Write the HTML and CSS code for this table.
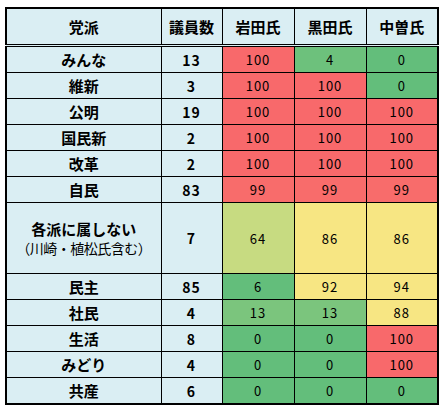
FILE: index.html
```html
<!DOCTYPE html>
<html lang="ja">
<head>
<meta charset="UTF-8">
<meta name="viewport" content="width=device-width, initial-scale=1.0">
<title>会派別 賛否</title>
<link rel="stylesheet" href="styles.css">
</head>
<body>

<table class="vote-table">
  <colgroup>
    <col class="col-party">
    <col class="col-seats">
    <col class="col-vote">
    <col class="col-vote">
    <col class="col-vote">
  </colgroup>
  <thead>
    <tr>
      <th>党派</th>
      <th>議員数</th>
      <th>岩田氏</th>
      <th>黒田氏</th>
      <th>中曽氏</th>
    </tr>
  </thead>
  <tbody>
    <tr>
      <td class="party">みんな</td><td class="seats">13</td>
      <td class="red">100</td><td class="green-4">4</td><td class="green">0</td>
    </tr>
    <tr>
      <td class="party">維新</td><td class="seats">3</td>
      <td class="red">100</td><td class="red">100</td><td class="green">0</td>
    </tr>
    <tr>
      <td class="party">公明</td><td class="seats">19</td>
      <td class="red">100</td><td class="red">100</td><td class="red">100</td>
    </tr>
    <tr>
      <td class="party">国民新</td><td class="seats">2</td>
      <td class="red">100</td><td class="red">100</td><td class="red">100</td>
    </tr>
    <tr>
      <td class="party">改革</td><td class="seats">2</td>
      <td class="red">100</td><td class="red">100</td><td class="red">100</td>
    </tr>
    <tr>
      <td class="party">自民</td><td class="seats">83</td>
      <td class="red-99">99</td><td class="red-99">99</td><td class="red-99">99</td>
    </tr>
    <tr class="tall">
      <td class="party">各派に属しない<br><span class="note">（川崎・植松氏含む）</span></td><td class="seats">7</td>
      <td class="lime">64</td><td class="yellow">86</td><td class="yellow">86</td>
    </tr>
    <tr>
      <td class="party">民主</td><td class="seats">85</td>
      <td class="green">6</td><td class="yellow">92</td><td class="yellow">94</td>
    </tr>
    <tr>
      <td class="party">社民</td><td class="seats">4</td>
      <td class="green-13">13</td><td class="green-13">13</td><td class="yellow">88</td>
    </tr>
    <tr>
      <td class="party">生活</td><td class="seats">8</td>
      <td class="green">0</td><td class="green">0</td><td class="red">100</td>
    </tr>
    <tr>
      <td class="party">みどり</td><td class="seats">4</td>
      <td class="green">0</td><td class="green">0</td><td class="red">100</td>
    </tr>
    <tr>
      <td class="party">共産</td><td class="seats">6</td>
      <td class="green">0</td><td class="green">0</td><td class="green">0</td>
    </tr>
  </tbody>
</table>

</body>
</html>
```

FILE: styles.css
```css
body {
  margin: 0;
  padding: 7px 0 0 5px;
  background: #fff;
  font-family: "Noto Sans CJK JP", sans-serif;
  color: #000;
}
.vote-table {
  border-collapse: collapse;
  table-layout: fixed;
  width: 432px;
  border: 2px solid #000;
}
.col-party {
  width: 155px;
}
.col-seats {
  width: 61px;
}
.col-vote {
  width: 72px;
}
.vote-table th,
.vote-table td {
  border: 1px solid #000;
  padding: 0;
  text-align: center;
  vertical-align: middle;
  line-height: 1;
}
.vote-table th {
  height: 35px;
  background: #daeef3;
  font-size: 15px;
  font-weight: bold;
  border-bottom: 3px double #000;
}
.vote-table td {
  height: 25px;
  font-size: 13px;
  letter-spacing: 1px;
}
.vote-table tr.tall td {
  height: 70px;
}
.party,
.seats {
  background: #daeef3;
  font-weight: bold;
}
.party {
  font-size: 15px !important;
  letter-spacing: 0 !important;
}
.seats {
  font-size: 14px !important;
}
.note {
  display: inline-block;
  margin-top: 5px;
  font-size: 14px;
  font-weight: normal;
  letter-spacing: -0.5px;
}
.red {
  background: #f8696b;
}
.red-99 {
  background: #f86c6b;
}
.green {
  background: #63be7b;
}
.green-4 {
  background: #6dc17c;
}
.green-13 {
  background: #7bc57d;
}
.lime {
  background: #c7db81;
}
.yellow {
  background: #f7e683;
}
```
